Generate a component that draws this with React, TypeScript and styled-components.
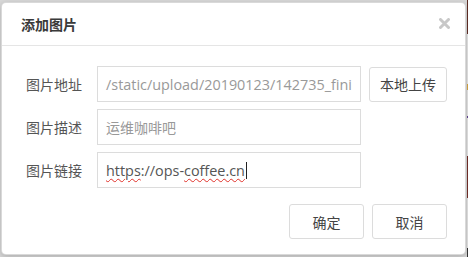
import React from "react";
import styled, { createGlobalStyle } from "styled-components";

const GlobalStyle = createGlobalStyle`
  html, body {
    margin: 0;
    padding: 0;
    background: #d8d8d8;
    font-family: "Open Sans", "Noto Sans CJK SC", sans-serif;
  }
`;

const App = () => {
  return (
    <Page>
      <GlobalStyle />
      <Modal>
        <Header>
          <Title>添加图片</Title>
          <CloseButton aria-label="close">
            <svg width="11" height="11" viewBox="0 0 11 11">
              <path d="M1.5 1.5 L9.5 9.5 M9.5 1.5 L1.5 9.5" stroke="#c8c8c8" strokeWidth="3" strokeLinecap="round" />
            </svg>
          </CloseButton>
        </Header>
        <Body>
          <Row>
            <Label>图片地址</Label>
            <Field muted>/static/upload/20190123/142735_fini</Field>
            <UploadButton>本地上传</UploadButton>
          </Row>
          <Row>
            <Label>图片描述</Label>
            <Field muted cjk>运维咖啡吧</Field>
          </Row>
          <Row>
            <Label>图片链接</Label>
            <Field>
              <Typo>https</Typo>://ops-<Typo>coffee.cn</Typo>
              <Caret />
            </Field>
          </Row>
        </Body>
        <Footer>
          <Button>确定</Button>
          <Button>取消</Button>
        </Footer>
      </Modal>
      <Behind>
        <Strip color="#5a2a22" h={34} />
        <Strip color="#d8d8d8" h={50} />
        <Strip color="#c89a3c" h={6} />
        <Strip color="#d8d8d8" h={26} />
        <Strip color="#5b3d8a" h={2} />
        <Strip color="#d8d8d8" h={38} />
        <Strip color="#6b2a24" h={42} />
        <Strip color="#d8d8d8" h={50} />
        <Strip color="#333" h={9} />
      </Behind>
    </Page>
  );
};

export default App;

const Page = styled.div`
  display: flex;
  width: 468px;
  height: 257px;
  overflow: hidden;
  padding: 2px 0 0 1px;
  box-sizing: border-box;
`;

const Modal = styled.div`
  width: 465px;
  height: 253px;
  flex-shrink: 0;
  background: #fff;
  border: 1px solid rgba(0, 0, 0, 0.15);
  border-radius: 5px;
  box-shadow: 0 2px 6px rgba(0, 0, 0, 0.2);
  box-sizing: border-box;
  display: flex;
  flex-direction: column;
`;

const Header = styled.div`
  height: 43px;
  border-bottom: 1px solid #e5e5e5;
  display: flex;
  align-items: center;
  justify-content: space-between;
  padding: 0 15px 0 19px;
  box-sizing: border-box;
`;

const Title = styled.div`
  font-family: "Noto Sans CJK SC", sans-serif;
  font-size: 14px;
  font-weight: 700;
  color: #3a3a3a;
  margin-top: -1px;
`;

const CloseButton = styled.div`
  display: flex;
  align-items: center;
  margin-top: -2px;
`;

const Body = styled.div`
  display: flex;
  flex-direction: column;
  gap: 7px;
  padding: 20px 0 0 24px;
`;

const Row = styled.div`
  display: flex;
  align-items: center;
  height: 36px;
`;

const Label = styled.div`
  width: 71px;
  font-family: "Noto Sans CJK SC", sans-serif;
  font-size: 14px;
  color: #555;
`;

const Field = styled.div<{ muted?: boolean; cjk?: boolean }>`
  width: 264px;
  height: 36px;
  box-sizing: border-box;
  border: 1px solid #dcdcdc;
  padding: 0 8px;
  display: flex;
  align-items: center;
  overflow: hidden;
  white-space: nowrap;
  font-family: ${(p) => (p.cjk ? '"Noto Sans CJK SC", sans-serif' : '"Open Sans", "Noto Sans CJK SC", sans-serif')};
  font-size: ${(p) => (p.cjk ? "14px" : "14.4px")};
  color: ${(p) => (p.muted ? "#999" : "#555")};
`;

const Typo = styled.span`
  text-decoration: underline wavy #e0312a;
  text-decoration-thickness: 1px;
  text-underline-offset: 2px;
`;

const Caret = styled.span`
  display: inline-block;
  width: 1px;
  height: 17px;
  background: #222;
  margin-left: 1px;
`;

const UploadButton = styled.div`
  margin-left: 8px;
  width: 78px;
  height: 35px;
  box-sizing: border-box;
  border: 1px solid #dcdcdc;
  border-radius: 3px;
  display: flex;
  align-items: center;
  justify-content: center;
  font-family: "Noto Sans CJK SC", sans-serif;
  font-size: 14px;
  color: #444;
`;

const Footer = styled.div`
  display: flex;
  justify-content: flex-end;
  gap: 8px;
  padding: 16px 18px 0 0;
`;

const Button = styled.div`
  width: 75px;
  height: 35px;
  box-sizing: border-box;
  border: 1px solid #dcdcdc;
  border-radius: 3px;
  display: flex;
  align-items: center;
  justify-content: center;
  font-family: "Noto Sans CJK SC", sans-serif;
  font-size: 14px;
  color: #444;
`;

const Behind = styled.div`
  display: flex;
  flex-direction: column;
  margin-top: -2px;
  margin-left: 1px;
  width: 2px;
`;

const Strip = styled.div<{ color: string; h: number }>`
  height: ${(p) => p.h}px;
  background: ${(p) => p.color};
`;
